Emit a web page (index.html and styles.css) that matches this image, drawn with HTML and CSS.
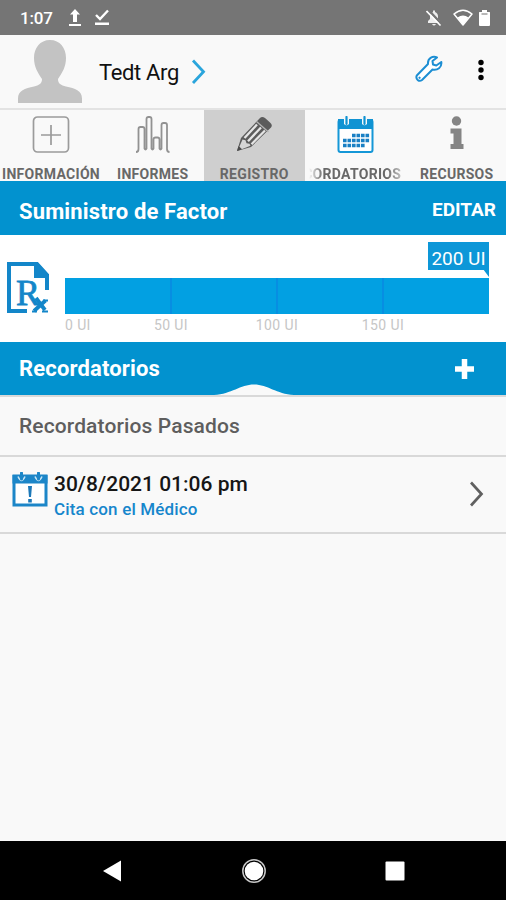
FILE: index.html
```html
<!DOCTYPE html>
<html lang="es">
<head>
  <meta charset="UTF-8">
  <title>Registro</title>
  <meta name="viewport" content="width=device-width, initial-scale=1.0">
  <link rel="stylesheet" href="styles.css">
</head>
<body>
  <div class="status-bar">
    <span class="clock">1:07</span>
    <svg class="upload" width="14" height="18" viewBox="0 0 14 18"><path d="M7 0l5 5.500H9V13H5V5.500H2zM1 15h12v2H1z" fill="#fff"/></svg>
    <svg class="done" width="16" height="18" viewBox="0 0 16 18"><path d="M2 6l4 4 8-8.500" fill="none" stroke="#fff" stroke-width="2.400"/><path d="M1 13.500h14V16H1z" fill="#fff"/></svg>
    <div class="status-right">
      <svg width="16" height="18" viewBox="0 0 16 18"><path d="M2 14V12l2-2V7.500q0-3.500 3-4.500V1.500h2V3q3 1 3 4.500V10l2 2v2zM6 15h4q-2 3-4 0z" fill="#eee"/><path d="M2.500 1l13 14" stroke="#757575" stroke-width="2.500"/><path d="M.5 2l14 14.500" stroke="#fff" stroke-width="1.600"/></svg>
      <svg width="20" height="17" viewBox="0 0 20 17"><path d="M1 5q9-7.500 18 0l-9 11z" fill="none" stroke="#fff" stroke-width="1.500" stroke-linejoin="round"/><path d="M4.500 8.500q5.500-4 11 0L10 16z" fill="#fff"/></svg>
      <svg width="11" height="18" viewBox="0 0 11 18"><path d="M3 1h5v2h2.500q.5 0 .5.500V16q0 1-1 1H1q-1 0-1-1V3.500Q0 3 .5 3H3z" fill="#fff"/><path d="M2.500 5h6" stroke="#888" stroke-width="1.200"/></svg>
    </div>
  </div>

  <div class="profile">
    <svg class="avatar" width="64" height="64" viewBox="0 0 64 64"><path d="M32 0C42 0 48 8 48 18c0 9-4 15-8 21 0 5 3 6 8 7.500 9 2 16 4 16 12V63H0v-4.500c0-8 7-10 16-12 5-1.500 8-2.500 8-7.500-4-6-8-12-8-21C16 8 22 0 32 0z" fill="#c3c3c3"/></svg>
    <span class="user-name">Tedt Arg</span>
    <svg class="user-arrow" width="15" height="26" viewBox="0 0 15 26"><path d="M2 1.500L12.500 12.700 2 24" fill="none" stroke="#2aa5dc" stroke-width="2.800"/></svg>
    <svg class="wrench" width="28" height="28" viewBox="0 0 28 28"><path d="M26.300 7l-5 3.500-3.300-1-.5-3.500L22 2.500c-4.500-2-9.500 1-9 6.500L1.800 20.500c-1.600 3.500 2.200 6.700 5.200 4.500L17.500 14.500c5 1 9.500-2 8.800-7.500z" fill="#fff" stroke="#1c8ed3" stroke-width="2" stroke-linejoin="round"/><path d="M4.500 22.700l.1.100" stroke="#1c8ed3" stroke-width="2.200" stroke-linecap="round"/></svg>
    <svg class="more" width="6" height="22" viewBox="0 0 6 22"><circle cx="3" cy="3.500" r="2.700"/><circle cx="3" cy="11" r="2.700"/><circle cx="3" cy="18.500" r="2.700"/></svg>
  </div>

  <div class="tabs">
    <div class="tab">
      <svg width="38" height="38" viewBox="0 0 38 38" fill="none" stroke="#9b9b9b" stroke-width="1.700"><rect x="1.500" y="1" width="35" height="35" rx="4"/><path d="M19 9v20M9 19h20"/></svg>
      <span>INFORMACIÓN</span>
    </div>
    <div class="tab">
      <svg width="38" height="38" viewBox="0 0 38 38" fill="none" stroke="#929292" stroke-width="1.800"><path d="M2 36q2.500 0 2.500-3V13q0-2 2-2h2q2 0 2 2v19.500q1 2 2 0V3q0-2 2-2h1q2 0 2 2v29.500q1 2 2 0V23.500q0-2 2-2h2q2 0 2 2v9q1 2 2 0V9q0-2 2-2h1.500q2 0 2 2v24q0 3 2.500 3"/></svg>
      <span>INFORMES</span>
    </div>
    <div class="tab active">
      <svg width="38" height="38" viewBox="0 0 38 38"><path d="M2 35L6 22 25 2q2-2 5 0l5 4.500q3 2.500 1 5L16 31z" fill="#5b5b5b"/><path d="M7.500 23.500l3 .7 1 3 3 .5 1 2L6 33.500 4 31.500z" fill="#d5d5d5"/><path d="M2 35l1.600-5 3.500 3.200z" fill="#4b4b4b"/><path d="M9.500 22L22 8.500M13 25.200L26 11.500M16.500 28.200L30 14.500" stroke="#e4e4e4" stroke-width="2.300"/><path d="M21.500 5.500l12 10.500" stroke="#b5b5b5" stroke-width="1.300"/></svg>
      <span>REGISTRO</span>
    </div>
    <div class="tab">
      <svg width="38" height="38" viewBox="0 0 38 38"><rect x="2.500" y="4" width="34" height="32" rx="2" fill="#fff" stroke="#1597d7" stroke-width="2"/><path d="M2 3h35v10H2z" fill="#1093d3"/><path d="M8 1h5v7q-2.500 2.500-5 0zM26 1h5v7q-2.500 2.500-5 0z" fill="#f9f9f9"/><path d="M10.500 1v7M28.500 1v7" stroke="#1093d3" stroke-width="2.200" stroke-linecap="round"/><path d="M16 19.500h18M7 24.500h27M7 29.500h22" stroke="#1a80c4" stroke-width="3.600" stroke-dasharray="3.600 .9"/></svg>
      <div class="marquee"><span>RECORDATORIOS</span></div>
    </div>
    <div class="tab">
      <svg width="38" height="38" viewBox="0 0 38 38" fill="#858585"><circle cx="19.500" cy="5" r="4.700"/><path d="M13.500 12.500H24.500v15.500H26.500v5H13.500V28H16.500V17.500h-3z"/></svg>
      <span>RECURSOS</span>
    </div>
  </div>

  <div class="section-bar">
    <h2 class="factor-title">Suministro de Factor</h2>
    <span class="edit">EDITAR</span>
  </div>

  <div class="factor">
    <svg class="rx-icon" width="42" height="52" viewBox="0 0 42 52"><path d="M20 49H2V2h28l10 11v15" fill="none" stroke="#1386c9" stroke-width="4"/><path d="M27 1h4l11 12v3H27z" fill="#1386c9"/><text class="rx-letter" x="9" y="43">R</text><path d="M29 36l9 12M38.500 38.500L27 49" stroke="#1386c9" stroke-width="3.800" fill="none"/><path d="M36 38.500h5M25 49.500h5M35 49.500h6" stroke="#1386c9" stroke-width="2.200"/></svg>
    <div class="chart">
      <div class="value-row"><span class="value">200 UI</span></div>
      <div class="bar"><i></i><i></i><i></i><i></i></div>
      <div class="scale"><span>0 UI</span><span>50 UI</span><span>100 UI</span><span>150 UI</span></div>
    </div>
  </div>

  <div class="section-bar reminders">
    <h2 class="reminders-title">Recordatorios</h2>
    <svg class="add" width="19" height="20" viewBox="0 0 19 20"><path d="M9.500 0v20M0 10h19" stroke="#fff" stroke-width="5.500"/></svg>
    <svg class="notch" width="80" height="12" viewBox="0 0 80 12"><path d="M0 12C18 11 26 1.500 40 1.500S62 11 80 12z" fill="#f9f9f9"/></svg>
  </div>

  <div class="past-title"><span>Recordatorios Pasados</span></div>

  <div class="reminder">
    <svg class="event-icon" width="36" height="36" viewBox="0 0 36 36"><path d="M2 4h32v29H2z" fill="#fff" stroke="#1c86c8" stroke-width="3"/><path d="M.5 3h35v8.500H.5z" fill="#1c86c8"/><path d="M6 4.500q3.500 8 7 0M23 4.500q3.500 8 7 0" fill="none" stroke="#c9e6f6" stroke-width="1.500"/><path d="M9.500 1v6M26.500 1v6" stroke="#1c86c8" stroke-width="3" stroke-linecap="round"/><path d="M16 14h4l-1 11h-2zM16.200 27h3.600v3.500h-3.600z" fill="#1c78b8"/></svg>
    <div class="reminder-text">
      <strong>30/8/2021 01:06 pm</strong>
      <span>Cita con el Médico</span>
    </div>
    <svg class="chevron" width="15" height="26" viewBox="0 0 15 26"><path d="M2 1.500L12.500 13 2 24.500" fill="none" stroke="#606060" stroke-width="2.700"/></svg>
  </div>

  <div class="spacer"></div>

  <div class="nav-bar">
    <svg width="18" height="22" viewBox="0 0 18 22"><path d="M0 11L18 .5v21z" fill="#fff"/></svg>
    <svg class="home" width="26" height="26" viewBox="0 0 26 26"><circle cx="13" cy="13" r="11.200" fill="none" stroke="#c8c8c8" stroke-width="1.500"/><circle cx="13" cy="13" r="9.300" fill="#fff"/></svg>
    <svg width="20" height="20" viewBox="0 0 20 20"><rect x=".5" y=".5" width="19" height="19" rx="1" fill="#fff"/></svg>
  </div>
</body>
</html>
```
FILE: styles.css
```css
* {
  box-sizing: border-box;
}
body {
  margin: 0;
  width: 506px;
  height: 900px;
  display: flex;
  flex-direction: column;
  background: #f9f9f9;
  font-family: Roboto, sans-serif;
  overflow: hidden;
}
svg {
  display: block;
  flex-shrink: 0;
}
h2 {
  margin: 0;
}
.status-bar {
  height: 35px;
  flex-shrink: 0;
  padding: 0 16px 0 20px;
  background: #757575;
  color: #fff;
  display: flex;
  align-items: center;
}
.clock {
  width: 48px;
  font-size: 17px;
  font-weight: 500;
  letter-spacing: -0.2px;
}
.done {
  margin-left: 12px;
}
.status-right {
  margin-left: auto;
  display: flex;
  align-items: center;
  gap: 9px;
}
.status-right svg:first-child {
  margin-right: 2px;
}
.status-right svg:last-child {
  margin-left: -3px;
}
.profile {
  height: 75px;
  flex-shrink: 0;
  padding: 0 22px 0 18px;
  border-bottom: 2px solid #e3e3e3;
  display: flex;
  align-items: center;
}
.avatar {
  align-self: flex-start;
  margin-top: 5px;
}
.user-name {
  width: 92px;
  margin-left: 17px;
  padding-top: 2px;
  font-size: 22px;
  letter-spacing: -0.35px;
  color: #111;
}
.wrench {
  margin: -5px 0 0 auto;
}
.more {
  margin: -3px 0 0 35px;
}
.tabs {
  height: 71px;
  flex-shrink: 0;
  display: grid;
  grid-template-columns: 102px 101.5px 101.5px 100.5px 100.5px;
}
.tab {
  min-width: 0;
  padding-top: 6px;
  display: flex;
  flex-direction: column;
  align-items: center;
  font-size: 14px;
  font-weight: 700;
  line-height: 18px;
  letter-spacing: 0.3px;
  color: #686868;
  white-space: nowrap;
}
.tab > span,
.marquee {
  margin-top: 11px;
}
.tab:last-child > span {
  margin-left: 2px;
}
.tab.active {
  background: #cfcfcf;
}
.marquee {
  width: 92px;
  display: flex;
  justify-content: flex-end;
  overflow: hidden;
  -webkit-mask-image: linear-gradient(to right, transparent, #000 14px, #000 78px, rgba(0, 0, 0, 0.4));
  mask-image: linear-gradient(to right, transparent, #000 14px, #000 78px, rgba(0, 0, 0, 0.4));
}
.section-bar {
  height: 54px;
  flex-shrink: 0;
  padding: 0 10px 0 19px;
  background: #0292cf;
  color: #fff;
  display: flex;
  align-items: center;
  justify-content: space-between;
}
.section-bar h2 {
  padding-top: 6px;
  font-size: 22px;
  font-weight: 700;
  letter-spacing: 0.15px;
}
.edit {
  padding-top: 2px;
  font-size: 19px;
  font-weight: 700;
}
.factor {
  height: 107px;
  flex-shrink: 0;
  padding: 7px 17px 0 7px;
  background: #fff;
  display: flex;
}
.rx-icon {
  margin-top: 20px;
}
.rx-letter {
  font: 36px "Liberation Serif", serif;
  fill: #1386c9;
  stroke: #1386c9;
  stroke-width: 0.8px;
}
.chart {
  flex: 1;
  margin-left: 16px;
}
.value-row {
  height: 36px;
  display: flex;
  justify-content: flex-end;
}
.value {
  position: relative;
  width: 61px;
  height: 28px;
  background: #0d97d8;
  color: #fff;
  font-size: 19px;
  line-height: 34px;
  text-align: center;
}
/* pointer of the value label */
.value::after {
  content: "";
  position: absolute;
  right: 0;
  top: 27px;
  border-top: 8px solid #0d97d8;
  border-left: 6px solid transparent;
}
.bar {
  height: 36px;
  background: #02a0e2;
  display: grid;
  grid-template-columns: repeat(4, 1fr);
}
.bar i + i {
  margin-left: -1px;
  border-left: 2px solid #078ee2;
}
.scale {
  display: grid;
  grid-template-columns: 1fr 1fr 1fr 1fr;
  padding-top: 3px;
  font-size: 14px;
  line-height: 16px;
  letter-spacing: 0.4px;
  color: #c6c6c6;
}
.scale span + span {
  justify-self: start;
  transform: translateX(-50%);
}
.reminders {
  position: relative;
  height: 53px;
  padding-right: 32px;
}
.reminders h2 {
  padding-top: 0;
}
.notch {
  position: absolute;
  left: 214px;
  bottom: 0;
}
.past-title {
  height: 62px;
  flex-shrink: 0;
  padding: 0 19px;
  border-top: 2px solid #d9d9d9;
  border-bottom: 2px solid #d9d9d9;
  display: flex;
  align-items: center;
  font-size: 21px;
  font-weight: 500;
  letter-spacing: 0.12px;
  color: #5e5e5e;
}
.reminder {
  height: 77px;
  flex-shrink: 0;
  padding: 0 22px 0 12px;
  border-bottom: 2px solid #d9d9d9;
  display: flex;
  align-items: center;
}
.event-icon {
  margin-top: -10px;
}
.reminder-text {
  flex: 1;
  margin-left: 6px;
  padding-top: 2px;
  display: flex;
  flex-direction: column;
}
.reminder-text strong {
  font-size: 21px;
  line-height: 26px;
  font-weight: 500;
  color: #161616;
}
.reminder-text span {
  font-size: 17px;
  line-height: 24px;
  font-weight: 500;
  letter-spacing: 0.16px;
  color: #1686cc;
}
.chevron {
  margin-top: -2px;
}
.spacer {
  flex: 1;
}
.nav-bar {
  height: 59px;
  flex-shrink: 0;
  padding: 0 101px 0 103px;
  background: #000;
  display: flex;
  align-items: center;
  justify-content: space-between;
}
.home {
  margin-left: 2px;
}
```
